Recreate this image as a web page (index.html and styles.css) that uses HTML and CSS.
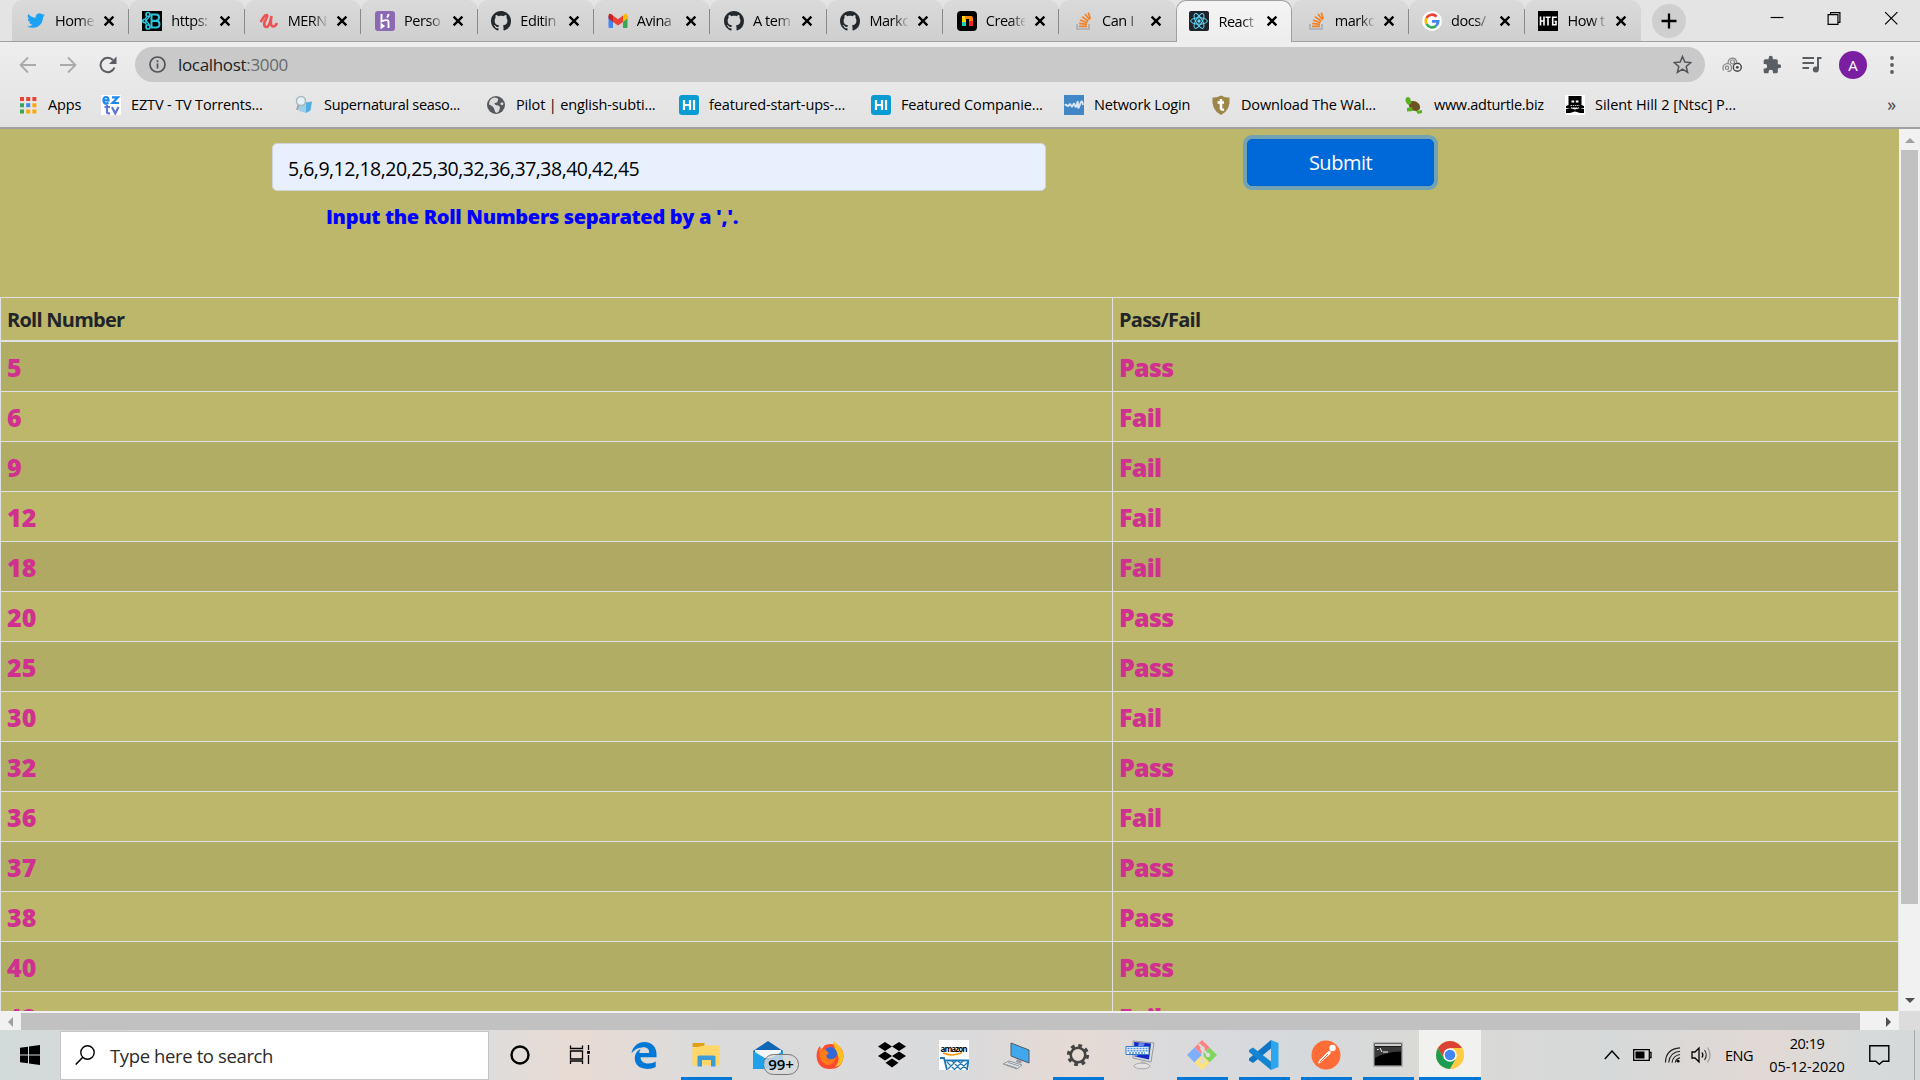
FILE: index.html
```html
<!DOCTYPE html>
<html lang="en">
<head>
<meta charset="utf-8">
<title>React App</title>
<link rel="stylesheet" href="styles.css">
</head>
<body>
<svg class="defs" aria-hidden="true">
  <symbol id="x" viewBox="0 0 12 12"><path d="M1.6 1.6l8.8 8.8M10.4 1.6l-8.8 8.8" stroke="#000" stroke-width="2.3"/></symbol>
  <symbol id="github" viewBox="0 0 16 16"><path fill="#24292e" fill-rule="evenodd" d="M8 0C3.58 0 0 3.58 0 8c0 3.54 2.29 6.53 5.47 7.59.4.07.55-.17.55-.38 0-.19-.01-.82-.01-1.49-2.01.37-2.53-.49-2.69-.94-.09-.23-.48-.94-.82-1.13-.28-.15-.68-.52-.01-.53.63-.01 1.08.58 1.23.82.72 1.21 1.87.87 2.33.66.07-.52.28-.87.51-1.07-1.78-.2-3.64-.89-3.64-3.95 0-.87.31-1.59.82-2.15-.08-.2-.36-1.02.08-2.12 0 0 .67-.21 2.2.82.64-.18 1.32-.27 2-.27s1.36.09 2 .27c1.53-1.04 2.2-.82 2.2-.82.44 1.1.16 1.92.08 2.12.51.56.82 1.27.82 2.15 0 3.07-1.87 3.75-3.65 3.95.29.25.54.73.54 1.48 0 1.07-.01 1.93-.01 2.2 0 .21.15.46.55.38A8.01 8.01 0 0016 8c0-4.42-3.58-8-8-8z"/></symbol>
  <symbol id="so" viewBox="0 0 20 20"><path d="M4 13v5h12v-5" fill="none" stroke="#a9adb3" stroke-width="1.7"/><path d="M6 15.3h8M6.2 12.3l7.8 1M7 9l7.4 2.7M9 5.6l6.3 4.6M12 3l4.6 5.8M15.3 1.500l2 6.600" stroke="#f48024" stroke-width="1.700"/></symbol>
  <symbol id="hi" viewBox="0 0 20 20"><rect width="20" height="20" rx="3" fill="#0b9bd3"/><path d="M5 5v10M11 5v10M5 10h6M15 5v10" stroke="#fff" stroke-width="2.2"/></symbol>
</svg>

<div class="browser">
  <header class="tabstrip">
    <div class="tabs">
      <div class="tab"><svg class="fav" viewBox="-1.500 -1 27 27"><path fill="#1da1f2" d="M23.95 4.57a10 10 0 01-2.82.77 4.96 4.96 0 002.16-2.72c-.95.55-2 .95-3.13 1.18a4.92 4.92 0 00-8.38 4.48C7.69 8.1 4.07 6.13 1.64 3.16a4.92 4.92 0 001.52 6.57 4.9 4.9 0 01-2.22-.61v.06a4.92 4.92 0 003.95 4.83 5 5 0 01-2.21.08 4.94 4.94 0 004.6 3.42A9.87 9.87 0 010 19.54a14 14 0 007.55 2.21c9.05 0 14-7.5 14-13.98 0-.21 0-.42-.02-.63a9.94 9.94 0 002.46-2.55z"/></svg><span class="tt">Home</span><svg class="x"><use href="#x"/></svg></div>
      <div class="tab"><svg class="fav" viewBox="0 0 20 20"><rect width="20" height="20"/><g fill="none" stroke="#2cc3dc" stroke-width="1.7"><path d="M9.500 3v14M9 3.500h5q3 0 3 3t-3 3.300H9M9 10h5.500q3 0 3 3.300t-3.500 3.200H9" stroke-width="2"/><circle cx="6" cy="3.500" r="2"/><circle cx="2.500" cy="10" r="1.700"/><circle cx="6" cy="16" r="2"/><path d="M5 5L3 9M3 11l2 4M8 5L4 9.500l4 5" stroke-width="1.300"/></g></svg><span class="tt">https:</span><svg class="x"><use href="#x"/></svg></div>
      <div class="tab"><svg class="fav" viewBox="0 0 20 20"><path d="M3 9Q5.500 4 7.500 4T5.500 11Q4.500 16 7.500 16T12.500 5Q10.500 15 14 15.500Q16.500 15.500 18 12M1.500 11Q3 9 4 7" fill="none" stroke="#ec5252" stroke-width="2.700"/></svg><span class="tt">MERN</span><svg class="x"><use href="#x"/></svg></div>
      <div class="tab"><svg class="fav" viewBox="0 0 20 20"><rect width="20" height="20" rx="3" fill="#8b69b3"/><path d="M6.500 3v7.500Q13.500 7.500 13.500 11v6M13.500 3Q13.500 5 12 6.500M6.500 13.500v3l2-1.500z" fill="none" stroke="#fff" stroke-width="1.900"/></svg><span class="tt">Perso</span><svg class="x"><use href="#x"/></svg></div>
      <div class="tab"><svg class="fav"><use href="#github"/></svg><span class="tt">Editin</span><svg class="x"><use href="#x"/></svg></div>
      <div class="tab"><svg class="fav" viewBox="0 0 20 20"><path d="M.500 5v11q0 1 1 1H5V8.500z" fill="#4285f4"/><path d="M19.500 5v11q0 1-1 1H15V8.500z" fill="#34a853"/><path d="M5 4.500L10 8.300l5-3.800V11l-5 3.500L5 11z" fill="#ea4335"/><path d="M.500 5Q.500 1.500 4 3.500l1 1V11L.500 7.500z" fill="#c5221f"/><path d="M19.500 5Q19.500 1.500 16 3.500l-1 1V11l4.500-3.500z" fill="#fbbc04"/></svg><span class="tt">Avina</span><svg class="x"><use href="#x"/></svg></div>
      <div class="tab"><svg class="fav"><use href="#github"/></svg><span class="tt">A tem</span><svg class="x"><use href="#x"/></svg></div>
      <div class="tab"><svg class="fav"><use href="#github"/></svg><span class="tt">Mark&#8203;d</span><svg class="x"><use href="#x"/></svg></div>
      <div class="tab"><svg class="fav" viewBox="0 0 20 20"><rect width="20" height="20" rx="4"/><path d="M5 15V5h4v10z" fill="#ffd500"/><path d="M5 11h4v4H5z" fill="#1fd0c0"/><path d="M8 5h6q2 0 2 2v8h-4V8H8z" fill="#f80"/><path d="M12 10h4v5h-4z" fill="#f22"/></svg><span class="tt">Create</span><svg class="x"><use href="#x"/></svg></div>
      <div class="tab nosep"><svg class="fav"><use href="#so"/></svg><span class="tt">Can I</span><svg class="x"><use href="#x"/></svg></div>
      <div class="tab active"><svg class="fav" viewBox="0 0 20 20"><rect width="20" height="20" rx="2" fill="#20232a"/><g fill="none" stroke="#61dafb" stroke-width="1"><ellipse cx="10" cy="10" rx="8.300" ry="3.200"/><ellipse cx="10" cy="10" rx="8.300" ry="3.200" transform="rotate(60 10 10)"/><ellipse cx="10" cy="10" rx="8.300" ry="3.200" transform="rotate(120 10 10)"/></g><circle cx="10" cy="10" r="1.700" fill="#61dafb"/></svg><span class="tt">React</span><svg class="x"><use href="#x"/></svg></div>
      <div class="tab"><svg class="fav"><use href="#so"/></svg><span class="tt">markd</span><svg class="x"><use href="#x"/></svg></div>
      <div class="tab"><svg class="fav" viewBox="0 0 20 20"><circle cx="10" cy="10" r="10" fill="#fff"/><g fill="none" stroke-width="2.700"><path d="M14.600 5.700A6.200 6.200 0 004.600 7" stroke="#ea4335"/><path d="M4.600 7a6.200 6.200 0 000 6" stroke="#fbbc05"/><path d="M4.600 13a6.200 6.200 0 009.400 2" stroke="#34a853"/><path d="M14 15q2.200-1.800 2.200-4.700H10" stroke="#4285f4"/></g></svg><span class="tt">docs/</span><svg class="x"><use href="#x"/></svg></div>
      <div class="tab nosep"><svg class="fav" viewBox="0 0 20 20"><rect width="20" height="20"/><path d="M2.500 5.500v9M6 5.500v9M2.500 10H6M7.500 6.300h5M10 6v8.500M18 7V6.300h-3.300v7.400H18v-3.200h-1.500" fill="none" stroke="#fff" stroke-width="1.600"/></svg><span class="tt">How t</span><svg class="x"><use href="#x"/></svg></div>
    </div>
    <div class="newtab"><svg width="16" height="16" viewBox="0 0 16 16"><path d="M8 .500v15M.500 8h15" stroke="#000" stroke-width="2.300"/></svg></div>
    <div class="winbtns">
      <svg viewBox="0 0 58 36"><path d="M22 17.500h13" stroke="#000" stroke-width="1.200"/></svg>
      <svg viewBox="0 0 58 36"><path d="M22.500 14.500h10v10h-10zM25 14.500v-2h9.500v10h-2" fill="none" stroke="#000" stroke-width="1.200"/></svg>
      <svg viewBox="0 0 58 36"><path d="M22.500 12l12.500 12.500M35 12L22.500 24.500" stroke="#000" stroke-width="1.200"/></svg>
    </div>
  </header>

  <div class="toolbar">
    <div class="nav">
      <svg width="18" height="18" viewBox="0 0 18 18"><path d="M17 9H2M9 1.500L1.500 9 9 16.500" fill="none" stroke="#a9aaab" stroke-width="1.800"/></svg>
      <svg width="18" height="18" viewBox="0 0 18 18"><path d="M1 9h15M9 1.500L16.500 9 9 16.500" fill="none" stroke="#a9aaab" stroke-width="1.800"/></svg>
      <svg width="18" height="18" viewBox="0 0 18 18"><path d="M15.500 11.500A7.200 7.200 0 1114 4" fill="none" stroke="#5a5d61" stroke-width="2"/><path d="M17.500.500V8H10z" fill="#5a5d61"/></svg>
    </div>
    <div class="omnibox">
      <svg width="17" height="17" viewBox="0 0 17 17"><circle cx="8.500" cy="8.500" r="7.500" fill="none" stroke="#505357" stroke-width="1.700"/><path d="M8.500 7.500v5M8.500 4.300v1.900" stroke="#505357" stroke-width="1.700"/></svg>
      <span class="url">localhost<span class="port">:3000</span></span>
      <svg class="star" width="19" height="19" viewBox="0 0 19 19"><path d="M9.500 1.500l2.300 5.600 6 .500-4.600 3.900 1.400 5.900-5.100-3.200-5.100 3.200 1.400-5.900L1.200 7.600l6-.500z" fill="none" stroke="#505357" stroke-width="1.500"/></svg>
    </div>
    <div class="tools">
      <svg viewBox="0 0 20 20"><g fill="none" stroke="#888" stroke-width="1.200"><path d="M6 8.500Q6 3.500 10.500 3.200q3.500 0 4.200 4"/><circle cx="10.500" cy="7" r="2"/><path d="M1.500 15.500Q-.500 9.500 5 8.500q4 0 4.500 4t-4 4"/><circle cx="5" cy="12.800" r="1.700"/><circle cx="15.300" cy="12.300" r="4" stroke="#444" stroke-width="1.400"/></g><circle cx="15.300" cy="12.300" r="1.400" fill="#444"/></svg>
      <svg viewBox="0 0 24 24"><path fill="#5a5d61" d="M20.500 11H19V7a2 2 0 00-2-2h-4V3.500a2.500 2.500 0 00-5 0V5H4a2 2 0 00-2 2v3.800h1.500a2.700 2.700 0 010 5.400H2V20c0 1.100.9 2 2 2h3.800v-1.500a2.700 2.700 0 015.400 0V22H17a2 2 0 002-2v-4h1.500a2.500 2.500 0 000-5z"/></svg>
      <svg viewBox="0 0 20 20"><path d="M.500 3h11.500M.500 8h11.500M.500 13H7" stroke="#5a5d61" stroke-width="1.900"/><path d="M19.500 3H16v11" fill="none" stroke="#5a5d61" stroke-width="2"/><circle cx="13.800" cy="14.500" r="3" fill="#5a5d61"/></svg>
      <span class="avatar">A</span>
      <svg viewBox="0 0 20 20"><g fill="#5a5d61"><circle cx="10" cy="3" r="1.900"/><circle cx="10" cy="10" r="1.900"/><circle cx="10" cy="17" r="1.900"/></g></svg>
    </div>
  </div>

  <nav class="bookmarks">
    <a class="bm apps"><svg viewBox="0 0 17 17"><path d="M0 0h4v4H0zM6.200 0h4v4h-4zM12.400 0h4v4h-4z" fill="#ea4335"/><path d="M0 6.200h4v4H0zM0 12.400h4v4H0z" fill="#34a853"/><path d="M6.200 6.200h4v4h-4z" fill="#4285f4"/><path d="M12.400 6.200h4v4h-4zM6.200 12.400h4v4h-4zM12.400 12.400h4v4h-4z" fill="#fbaa05"/></svg><span>Apps</span></a>
    <a class="bm w193"><svg viewBox="0 0 20 20"><rect width="20" height="20" fill="#fff"/><g fill="none" stroke-width="2.200"><path d="M2.500 5.300h5Q7.500 2 5 2T2.500 5.300 5 8.600l2.500-.800M11 2.300h6L11.500 8H18" stroke="#1e88f0"/><path d="M6 9.500V17q0 1.500 3 1.500M3.500 12h5.500M11 12l3.200 6.500L17.500 12" stroke="#5b78d8"/></g></svg><span>EZTV - TV Torrents...</span></a>
    <a class="bm w192 tight"><svg viewBox="0 0 20 20"><path d="M9 8l9-1.500-1.500 9L12 18z" fill="#52aede"/><path d="M4 11l8-4v11l-7-2z" fill="#9ccfe8"/><circle cx="7" cy="6" r="4.500" fill="#e6f1f6" stroke="#a9b7be" stroke-width="1.500"/><path d="M4.500 10L3 15" stroke="#98a6ad" stroke-width="2"/></svg><span>Supernatural seaso...</span></a>
    <a class="bm w193"><svg viewBox="0 0 20 20"><circle cx="10" cy="10" r="9" fill="#55585c"/><path d="M8 2.500Q13 2.500 12 5.500T8.500 8q0 2 3.500 2.500T12.500 17Q9 19 8.500 15T3 9.500Q3 4 8 2.500M14 9q2-3 3.500-.500-.500 3-3.500.500" fill="#dcdcdc"/></svg><span>Pilot | english-subti...</span></a>
    <a class="bm w192"><svg><use href="#hi"/></svg><span>featured-start-ups-...</span></a>
    <a class="bm w193"><svg><use href="#hi"/></svg><span>Featured Companie...</span></a>
    <a class="bm w147"><svg viewBox="0 0 20 20"><rect width="20" height="20" fill="#4187c6"/><path d="M1 10.500q1-1.500 2 0t2-.500 2 .500 2-.500 2 .500 2-1.500 1 1 2-.500 3 .500" fill="none" stroke="#dbe8f5" stroke-width="1.800"/></svg><span>Network Login</span></a>
    <a class="bm w193"><svg viewBox="0 0 20 20"><path d="M1.500 2.500Q6 3 10 .500q4 2.500 8.500 2Q20 15 10 20 0 15 1.500 2.500z" fill="#9c8748"/><path d="M10 4v9.500q.500 1.500 3 1M6.500 7.500H13" fill="none" stroke="#fff" stroke-width="2.600"/></svg><span>Download The Wal...</span></a>
    <a class="bm w161 tight"><svg viewBox="0 0 20 20"><ellipse cx="10.500" cy="11" rx="6" ry="4.500" transform="rotate(30 10.500 11)" fill="#6e5320"/><path d="M1.500 4Q3 .500 6 3l1.500 5-2.500 2Q1 8 1.500 4zM3 13l5-1 1 4-6 .500zM12 16l6-1v3l-4 1z" fill="#57b21e"/></svg><span>www.adturtle.biz</span></a>
    <a class="bm wide"><svg viewBox="0 0 20 20"><rect width="20" height="20" fill="#fff"/><path d="M3.500 1h13v9l2.500 1v2H1v-2l2.500-1zM1 14l4-1 5 1.500L15 13l4 1v4h-4l-5-1.500L5 18H1z"/><path d="M6.500 6.500h2.700M10.800 6.500h2.700" stroke="#fff" stroke-width="2"/><path d="M5.500 10.500h9M6 12.700h8" stroke="#bbb" stroke-dasharray="1.500 .700"/></svg><span>Silent Hill 2 [Ntsc] P...</span></a>
    <span class="more">»</span>
  </nav>

  <div class="viewport">
    <main class="page">
      <form class="rollform">
        <div class="field">
          <div class="input">5,6,9,12,18,20,25,30,32,36,37,38,40,42,45</div>
          <p class="hint">Input the Roll Numbers separated by a ','.</p>
        </div>
        <button type="button" class="submit">Submit</button>
      </form>
      <table class="results">
        <thead><tr><th class="roll">Roll Number</th><th>Pass/Fail</th></tr></thead>
        <tbody>
          <tr><td>5</td><td>Pass</td></tr>
          <tr><td>6</td><td>Fail</td></tr>
          <tr><td>9</td><td>Fail</td></tr>
          <tr><td>12</td><td>Fail</td></tr>
          <tr class="hover"><td>18</td><td>Fail</td></tr>
          <tr><td>20</td><td>Pass</td></tr>
          <tr><td>25</td><td>Pass</td></tr>
          <tr><td>30</td><td>Fail</td></tr>
          <tr><td>32</td><td>Pass</td></tr>
          <tr><td>36</td><td>Fail</td></tr>
          <tr><td>37</td><td>Pass</td></tr>
          <tr><td>38</td><td>Pass</td></tr>
          <tr><td>40</td><td>Pass</td></tr>
          <tr><td>42</td><td>Fail</td></tr>
        </tbody>
      </table>
    </main>
    <div class="vscroll"><i class="arrow up"></i><div class="vthumb"></div><i class="arrow down"></i></div>
    <div class="hscroll"><i class="arrow left"></i><div class="hthumb"></div><i class="arrow right"></i></div>
    <div class="corner"></div>
  </div>
</div>

<footer class="taskbar">
  <div class="start"><svg width="20" height="20" viewBox="0 0 20 20"><path d="M0 2.800L8 1.700v7.800H0zM9 1.500L20 0v9.500H9zM0 10.500h8v7.800L0 17.200zM9 10.500h11V20L9 18.500z"/></svg></div>
  <div class="search"><svg width="20" height="20" viewBox="0 0 20 20"><circle cx="12.500" cy="7.500" r="6.700" fill="none" stroke="#000" stroke-width="1.400"/><path d="M7.800 12.300L.700 19.500" stroke="#000" stroke-width="1.500"/></svg><span>Type here to search</span></div>
  <div class="slots">
    <div class="slot"><svg viewBox="0 0 30 30"><circle cx="15" cy="15" r="8.500" fill="none" stroke="#000" stroke-width="2.400"/></svg></div>
    <div class="slot"><svg viewBox="0 0 30 30"><path d="M3.500 5.500v3h12v-3M3.500 24v-3h12v3M3.500 11h12v8h-12zM21.500 5v5M21.500 15v9" fill="none" stroke="#000" stroke-width="1.300"/><path d="M20.100 11h2.800v2.800h-2.800z"/></svg></div>
    <div class="slot"><svg viewBox="0 0 30 30"><path fill="#0078d7" d="M2.500 13.300C3.800 6.200 9 1.900 15.500 1.900c7.500 0 12 5.300 12 12v3.300H11.500c.1 4.300 4 6.300 8 6.300 3 0 5.300-.900 7.200-2v5.400c-2.300 1.300-5.300 2-8.700 2-7.300 0-12.200-3.800-12.200-10.300 0-4.200 2-7.800 6.200-10-1.200 1.500-1.500 3-1.700 4.400h9.900c.1-3.500-1.700-5.700-5.700-5.700-4.900 0-9 2.300-12 6z"/></svg></div>
    <div class="slot open"><svg viewBox="0 0 30 30"><path d="M1.500 4q0-1 1-1h11v4h-12z" fill="#dfa010"/><path d="M1.500 8l12-2.500H28.500v20h-27z" fill="#ffd667"/><path d="M6.500 26.500V17q0-1.500 1.500-1.500h15q1.500 0 1.500 1.500v9.500H20V20h-9v6.500z" fill="#3c9bd9"/></svg></div>
    <div class="slot"><svg viewBox="0 0 30 30"><path d="M0 11L15 1l15 10v18H0z" fill="#0f66b5"/><path d="M2 10h26v8H2z" fill="#f5f5f5"/><path d="M0 11l15 9 15-9v18H0z" fill="#1fa0e8"/></svg><b class="badge">99+</b></div>
    <div class="slot"><svg viewBox="0 0 30 30"><path d="M15 4Q28 4 28.500 16 27.500 29 15 29T1.500 16Q2 9 5 6l1 4 4-5z" fill="#ff4a32"/><path d="M18 1q10 6 10.500 15Q28 26 20 27q7-8 0-18z" fill="#ffbf24"/><circle cx="15.500" cy="13.500" r="6.500" fill="#2f6ad8"/><path d="M4 9q7-1 10 5-4 0-2 4 5 3 9-1-2 8-9 8Q3 22 4 9z" fill="#ff7b19"/></svg></div>
    <div class="slot"><svg viewBox="0 0 30 30"><path d="M8 2l7 4.600L8 11 1 6.600zM22 2l7 4.600L22 11l-7-4.400zM8 11.500l7 4.500-7 4.600-7-4.600zM22 11.500l7 4.500-7 4.600-7-4.600zM15 18.500l6.500 4.300L15 27.500l-6.500-4.700z"/></svg></div>
    <div class="slot"><svg viewBox="0 0 30 30"><rect width="30" height="30" fill="#fff"/><text x="1.500" y="12" class="amz" textLength="27">amazon</text><path d="M4 13q10 4 19-.500" fill="none" stroke="#f90" stroke-width="1.500"/><path d="M1 18h4l3 12M6.500 20.500h23L28 30" fill="none" stroke="#1f78b4" stroke-width="1.800"/><path d="M8 22l8 8M13 21l9 9M19 21l9 8M29 22l-8 8M24 21l-9 9M17 21l-8 8" stroke="#1f78b4" stroke-width="1.200"/></svg></div>
    <div class="slot"><svg viewBox="0 0 30 30"><path d="M10 3l18 7v13L10 16z" fill="#42a8ee" stroke="#4d5a66"/><path d="M16 19l5 1.500-1 3-5-1.500z" fill="#99a"/><path d="M2 24l6-3 13 4-5 4z" fill="#e4e7ea" stroke="#8e969c"/><path d="M5 24.500l11 3.500M7 22.500l11 3.500" stroke="#8e969c"/></svg></div>
    <div class="slot open"><svg viewBox="0 0 30 30"><circle cx="15" cy="15" r="7.300" fill="none" stroke="#444" stroke-width="2.600"/><circle cx="15" cy="15" r="9.500" fill="none" stroke="#444" stroke-width="3.200" stroke-dasharray="3.731 3.731"/></svg></div>
    <div class="slot"><svg viewBox="0 0 30 30"><path d="M8 1l21 2-3 19-18-4z" fill="#d9dde4" stroke="#999"/><path d="M9 2l17 1.500-2 16-14-3z" fill="#1329c2"/><path d="M14 3l6 .500-8 13h-3z" fill="#6f8cf0"/><path d="M1 6.500h23v8H1z" fill="#eef4fc" stroke="#3a78c8"/><path d="M2.500 8.500h20M2.500 10.700h20M4 13h16" stroke="#4e93dc" stroke-width="1.400" stroke-dasharray="2 1"/><path d="M16 21l5 1v3h-5z" fill="#bbb"/><ellipse cx="17" cy="26" rx="8" ry="2.800" fill="#e2e2e2" stroke="#aaa"/></svg></div>
    <div class="slot open"><svg viewBox="0 0 30 30"><path d="M15 0l7.500 7.500-7.500 7.500-7.500-7.500z" fill="#ff8080"/><path d="M22.500 7.500L30 15l-7.500 7.500L15 15z" fill="#80d65c"/><path d="M7.500 7.500L15 15l-7.500 7.500L0 15z" fill="#7eaefc"/><path d="M15 15l7.500 7.500L15 30l-7.500-7.500z" fill="#ffe37a"/><path d="M12 4l3.500 4v13M15.500 9l5.500 6" fill="none" stroke="#dcdcdc" stroke-width="2"/><g fill="#dcdcdc"><circle cx="15.500" cy="8.500" r="2.300"/><circle cx="21" cy="15" r="2.300"/><circle cx="15.500" cy="21.500" r="2.300"/></g></svg></div>
    <div class="slot open"><svg viewBox="0 0 30 30"><path d="M22 0v8.500L4 23 0 20.500v-2z" fill="#0f75c4"/><path d="M22 30v-8.500L4 7.500 0 10v2z" fill="#1485d1"/><path d="M22 0l7.500 3v24L22 30z" fill="#2ea6ec"/></svg></div>
    <div class="slot open"><svg viewBox="0 0 30 30"><ellipse cx="15" cy="15" rx="14.500" ry="14.500" fill="#ff6c37"/><circle cx="21.500" cy="8" r="3.200" fill="#fff"/><path d="M19.500 10.500q1 3-2.500 5.500L9 23l-2 .500 1-3 7-7q2-2.500 4.500-3z" fill="#fff"/><path d="M9 22l8-8" stroke="#ff6c37"/></svg></div>
    <div class="slot open"><svg viewBox="0 0 30 30"><rect x="1" y="3" width="28" height="23" fill="#000" stroke="#999" stroke-width="1.300"/><path d="M2 4h26v2H2z" fill="#ccc"/><path d="M2 6.500h26v5Q12 12 2 18z" fill="#3a3a3a"/><path d="M4 9.500h1.500M7 8l2 4M10 12h5" stroke="#fff"/></svg></div>
    <div class="slot open current"><svg viewBox="0 0 30 30"><circle cx="15" cy="15" r="14" fill="#fc4"/><path d="M2.900 8A14 14 0 0127.100 8H15L9 18.500z" fill="#d94235"/><path d="M2.900 8A14 14 0 0015 29l6-10.500L15 21l-6-2.500z" fill="#1a9c54"/><path d="M27.100 8A14 14 0 0115 29l6.500-11L20 8z" fill="#fc4"/><circle cx="15" cy="15" r="6.800" fill="#fff"/><circle cx="15" cy="15" r="5.300" fill="#4285f4"/></svg></div>
  </div>
  <div class="tray">
    <svg class="caret" viewBox="0 0 16 10"><path d="M.800 9L8 1l7.200 8" fill="none" stroke="#000" stroke-width="1.400"/></svg>
    <svg class="batt" viewBox="0 0 19 12"><path d="M.700.700h15.600v10.600H.700zM16.300 3.500h1.700v5h-1.700" fill="none" stroke="#000" stroke-width="1.300"/><path d="M2.500 2.500h9v7h-9z"/></svg>
    <svg class="wifi" viewBox="0 0 18 18"><g fill="none" stroke="#222" stroke-width="1.200"><path d="M1.500 17Q2 2.500 17 1.500"/><path d="M5 17Q6 6 17 5"/><path d="M8.500 17q1-7.500 8.500-8.500"/><path d="M12 17q.500-4 5-5"/></g><circle cx="15" cy="15.500" r="1.500"/></svg>
    <svg class="vol" viewBox="0 0 21 18"><path d="M1 6h3l4-4v14l-4-4H1zM11 6.500q1.700 2.500 0 5" fill="none" stroke="#000" stroke-width="1.300"/><path d="M13.500 4q3.500 5 0 10" fill="none" stroke="#333" stroke-width="1.200"/><path d="M16.500 1.500q5 7.500 0 15" fill="none" stroke="#999" stroke-width="1.200"/></svg>
    <span class="lang">ENG</span>
    <div class="clock"><span class="time">20:19</span><span>05-12-2020</span></div>
    <svg class="note" viewBox="0 0 21 20"><path d="M.800.800h19v15.500h-6l-3.500 3-3.500-3h-6z" fill="none" stroke="#000" stroke-width="1.400"/></svg>
  </div>
</footer>
</body>
</html>
```
FILE: styles.css
```css
* { box-sizing: border-box; }

body {
  margin: 0;
  width: 1920px;
  height: 1080px;
  overflow: hidden;
  display: flex;
  flex-direction: column;
  font-family: "Open Sans", "Noto Sans", sans-serif;
  color: #000;
}

.defs { position: absolute; width: 0; height: 0; }
svg { display: block; flex: none; }

.browser { height: 1030px; display: flex; flex-direction: column; }

/* tab strip */
.tabstrip {
  height: 42px;
  display: flex;
  background: #e4e4e4;
  border-bottom: 1px solid #a0a0a0;
  padding-left: 12.4px;
}
.tabs { display: flex; }
.tab {
  width: 116.35px;
  height: 41px;
  display: flex;
  align-items: center;
  padding-left: 13.6px;
  border-radius: 10px 10px 0 0;
  background: linear-gradient(#dadada, #cfcfcf);
  position: relative;
}
.tab::after {
  content: "";
  position: absolute;
  right: -0.5px;
  top: 9px;
  width: 1.5px;
  height: 25px;
  background: #8a8a8a;
}
.tab.nosep::after { display: none; }
.tab.active {
  height: 42px;
  background: linear-gradient(#f4f4f4, #ededed);
  border: 1px solid #a0a0a0;
  border-bottom: 0;
  padding-left: 12.6px;
  padding-bottom: 1px;
}
.tab.active::after { display: none; }
.fav { width: 20px; height: 20px; }
.tt {
  width: 39px;
  margin-left: 9px;
  overflow: hidden;
  white-space: nowrap;
  font-size: 14.5px;
  letter-spacing: -0.45px;
  -webkit-mask-image: linear-gradient(90deg, #000 62%, rgba(0, 0, 0, .1));
  mask-image: linear-gradient(90deg, #000 62%, rgba(0, 0, 0, .1));
}
.x { width: 12px; height: 12px; margin-left: 9px; }
.newtab {
  width: 34px;
  height: 34px;
  margin: 4px 0 0 11px;
  border-radius: 50%;
  background: #cfcfcf;
  display: grid;
  place-items: center;
}
.winbtns { display: flex; margin-left: auto; }
.winbtns svg { width: 57px; height: 36px; }

/* address row */
.toolbar {
  height: 42px;
  display: flex;
  align-items: center;
  background: linear-gradient(#eee, #e8e8e8);
  padding-top: 3px;
}
.nav { flex: none; width: 135px; display: flex; gap: 22px; padding-left: 19px; }
.omnibox {
  flex: none;
  width: 1570px;
  height: 35px;
  border-radius: 18px;
  background: #c9c9c9;
  display: flex;
  align-items: center;
  padding: 0 13px 0 14px;
}
.url { margin: -1px 0 0 12px; font-size: 17px; letter-spacing: -0.33px; color: #222; white-space: nowrap; }
.port { color: #66696d; }
.star { margin-left: auto; }
.tools { display: flex; align-items: center; padding-left: 17px; }
.tools svg { width: 20px; height: 20px; margin-right: 20px; }
.tools svg:last-child { margin-right: 0; }
.avatar {
  flex: none;
  width: 28px;
  height: 28px;
  border-radius: 50%;
  margin: 0 15px 0 -3px;
  background: #7b1fa2;
  color: #fff;
  display: grid;
  place-items: center;
  font-size: 15px;
}

/* bookmarks */
.bookmarks {
  height: 45px;
  display: flex;
  align-items: center;
  padding: 0 0 1px 20px;
  background: linear-gradient(#e8e8e8, #e2e2e2);
  border-bottom: 2px solid #a0a0a0;
  font-size: 14.5px;
  letter-spacing: -0.15px;
  white-space: nowrap;
}
.bm { display: flex; align-items: center; gap: 10px; }
.bm span { margin-top: -2px; }
.bm svg { width: 20px; height: 20px; }
.bm.apps { width: 81px; gap: 11px; }
.bm.apps svg { width: 17px; height: 17px; }
.bm.tight { letter-spacing: -0.3px; }
.bm.wide { letter-spacing: -0.04px; }
.w147 { width: 147px; }
.w161 { width: 161px; }
.w192 { width: 192px; }
.w193 { width: 193px; }
.more { margin: 0 24px 3px auto; font-size: 18px; color: #444; }

/* page viewport with its scrollbars */
.viewport {
  height: 901px;
  display: grid;
  grid-template-columns: 1899px 21px;
  grid-template-rows: 882px 19px;
}
.page { background: #bdb76b; overflow: hidden; color: #212529; }
.rollform {
  height: 168px;
  display: flex;
  padding: 14px 0 0 272px;
}
.field { width: 774px; }
.input {
  height: 48px;
  border: 1px solid #ced4da;
  border-radius: 5px;
  background: #e8f0fe;
  padding: 3px 15px 0;
  font-size: 19.5px;
  letter-spacing: -0.5px;
  line-height: 44px;
  color: #000;
}
.hint {
  margin: 11px 0 0 54px;
  font-size: 20px;
  line-height: 30px;
  font-weight: 800;
  letter-spacing: -0.35px;
  color: #00f;
}
.submit {
  width: 187px;
  height: 47px;
  margin: -4px 0 0 201px;
  border: 1px solid #0062cc;
  border-radius: 5px;
  background: #0069d9;
  box-shadow: 0 0 0 4px rgba(38, 143, 255, .5);
  color: #fff;
  font: 20px "Open Sans", sans-serif;
  letter-spacing: -0.5px;
}
.results {
  width: 1899px;
  border-collapse: separate;
  border-spacing: 0;
  table-layout: fixed;
  border-left: 1px solid #dee2e6;
}
.results th, .results td {
  padding: 0 6px;
  text-align: left;
  border-right: 1px solid #dee2e6;
}
.results th {
  height: 45px;
  font-size: 20px;
  font-weight: 700;
  letter-spacing: -0.75px;
  border-top: 1px solid #dee2e6;
  border-bottom: 2px solid #dee2e6;
}
.results .roll { width: 1112px; }
.results td {
  height: 50px;
  padding-bottom: 0;
  padding-top: 1px;
  font-size: 25px;
  line-height: 40px;
  font-weight: 800;
  color: #d03090;
  border-bottom: 1px solid #dee2e6;
}
.results td + td { letter-spacing: -0.7px; }
.results tbody tr:nth-child(odd) { background: #b2ad65; }
.results tbody tr.hover { background: #afa963; }

.vscroll, .hscroll { background: #f1f1f1; display: flex; align-items: center; justify-content: space-between; }
.vscroll { flex-direction: column; padding: 9px 0 8px; }
.hscroll { grid-row: 2; padding: 2px 8px 0 8px; }
.vthumb { width: 17px; height: 754px; background: #c1c1c1; margin: 7px 2px auto; }
.hthumb { width: 1839px; height: 17px; background: #c1c1c1; margin: 0 auto 0 8px; }
.corner { background: #dcdcdc; }
.arrow { width: 0; height: 0; border: 5px solid transparent; }
.up { border-top: 0; border-bottom-color: #a0a0a0; }
.down { border-bottom: 0; border-top-color: #505050; }
.left { border-left: 0; border-right-color: #a0a0a0; }
.right { border-right: 0; border-left-color: #505050; }

/* taskbar */
.taskbar {
  height: 50px;
  display: flex;
  background: linear-gradient(90deg, #d3dada 0, #d6d9da 4%, #ddd 25%, #e8dbd3 30%, #dcdbdb 36%, #d9dadc 50%, #e6dad4 56%, #dadadd 61%, #d6d9dc 68%, #dad9d6 74%, #d6d9d9 84%, #e2d9d5 92%, #d7dada 97%, #d6d9d9);
}
.start { width: 60px; padding: 15px 0 0 20px; }
.search {
  width: 429px;
  height: 49px;
  margin-top: 1px;
  border: 1px solid #c5c5c5;
  background: #fff;
  display: flex;
  align-items: center;
  gap: 15px;
  padding: 0 0 1px 14px;
  font-size: 18.5px;
  letter-spacing: -0.38px;
  color: #2b2b2b;
}
.slots { display: flex; }
.slot { width: 62px; height: 50px; display: grid; place-items: center; position: relative; }
.slot svg { width: 30px; height: 30px; }
.slot.open::after {
  content: "";
  position: absolute;
  left: 6px;
  right: 5px;
  bottom: 0;
  height: 3px;
  background: #0078d7;
}
.slot.current { background: #f1f1f0; }
.slot.current::after { left: 0; right: 0; }
.badge {
  position: absolute;
  left: 26px;
  top: 24px;
  width: 36px;
  height: 21px;
  border: 1px solid #777;
  border-radius: 11px;
  background: rgba(215, 218, 220, .8);
  font-size: 15px;
  font-weight: 600;
  line-height: 19px;
  text-align: center;
}
.amz { font: bold 8px "Open Sans", sans-serif; }
.tray { flex: 1; display: flex; align-items: center; font-size: 14.5px; }
.caret { width: 16px; height: 10px; margin-left: 123px; }
.batt { width: 19px; height: 12px; margin-left: 13px; }
.wifi { width: 17px; height: 18px; margin-left: 12px; }
.vol { width: 21px; height: 18px; margin-left: 10px; }
.lang { width: 28px; margin-left: 13px; letter-spacing: -0.5px; }
.clock {
  width: 108px;
  display: flex;
  flex-direction: column;
  align-items: center;
  line-height: 23px;
  margin-bottom: 1px;
  white-space: nowrap;
}
.time { letter-spacing: -0.5px; }
.note { width: 21px; height: 20px; margin-left: 8px; }
.tray::after { content: ""; width: 1px; height: 50px; background: #aaa; margin: 0 5px 0 auto; }
```
